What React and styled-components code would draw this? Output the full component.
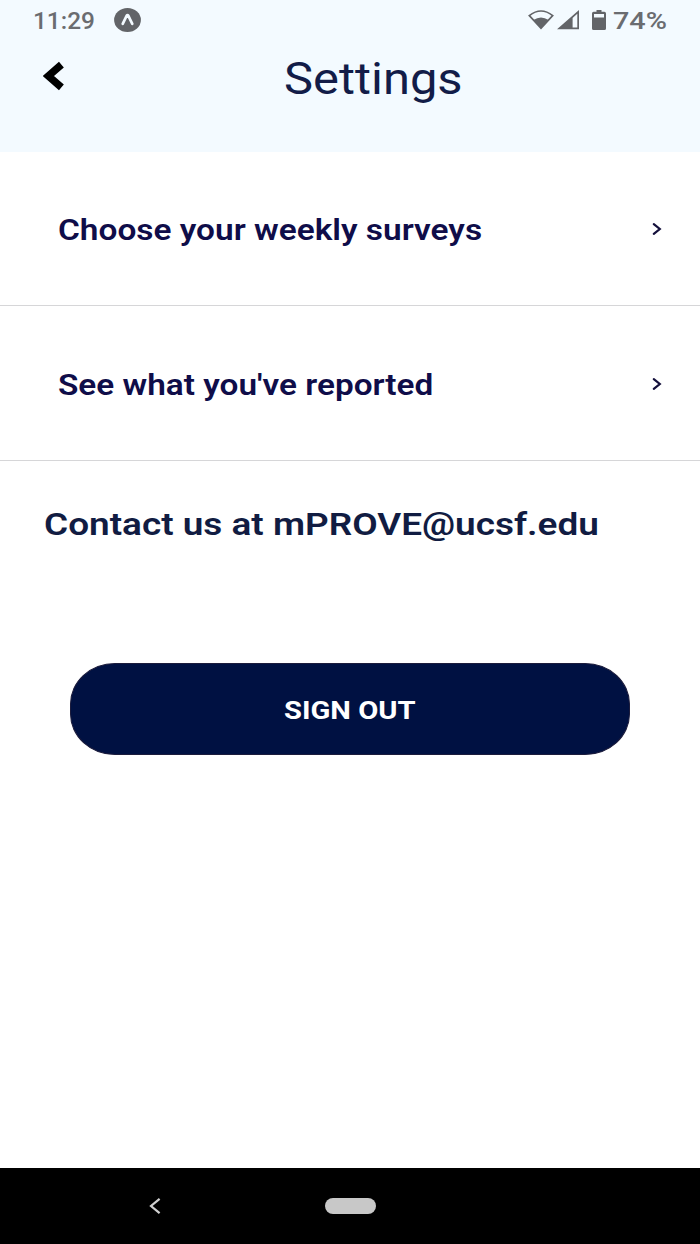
import React from "react";
import styled, { createGlobalStyle } from "styled-components";

const rows = [
  { text: "Choose your weekly surveys", width: 424, height: 154 },
  { text: "See what you've reported", width: 375, height: 155 },
];

const App = () => {
  return (
    <>
      <GlobalStyle />
      <Screen>
        <Header>
          <StatusBar>
            <Status>
              <Label $size={24} $width={62} $weight={500} $color="#6a6c70">
                11:29
              </Label>
              <ExpoIcon viewBox="0 0 27 24">
                <ellipse cx="13.5" cy="12" rx="13.4" ry="12" fill="#626468" />
                <path
                  d="M8.7 15.8 L12.6 7.8 Q13.5 6.4 14.4 7.8 L18.3 15.8"
                  fill="none"
                  stroke="#f3faff"
                  strokeWidth="2.7"
                  strokeLinecap="round"
                  strokeLinejoin="round"
                />
              </ExpoIcon>
            </Status>
            <Status>
              <WifiIcon viewBox="0 0 26 20">
                <path
                  d="M1.3 5.6 Q13 -3.6 24.7 5.6 L13 18.2 Z"
                  fill="none"
                  stroke="#626468"
                  strokeWidth="1.7"
                />
                <path d="M5.4 10 Q13 5 20.6 10 L13 18.6 Z" fill="#626468" />
              </WifiIcon>
              <SignalIcon viewBox="0 0 22 20">
                <path
                  d="M0 19.3 L22 0 V19.3 Z M15.6 8 V17.6 H20.3 V3.7 Z"
                  fill="#626468"
                  fillRule="evenodd"
                />
              </SignalIcon>
              <BatteryIcon viewBox="0 0 14 20">
                <path
                  d="M4.5 0 H9.5 V1.8 H12.4 Q14 1.8 14 3.4 V18.4 Q14 20 12.4 20 H1.6 Q0 20 0 18.4 V3.4 Q0 1.8 1.6 1.8 H4.5 Z M2 4 V7.4 H12 V4 Z"
                  fill="#626468"
                  fillRule="evenodd"
                />
              </BatteryIcon>
              <Label $size={24} $width={54} $weight={500} $color="#6a6c70">
                74%
              </Label>
            </Status>
          </StatusBar>
          <TitleBar>
            <BackIcon viewBox="0 0 22 30">
              <path d="M18.4 3.6 L5.4 15 L18.4 26.4" />
            </BackIcon>
            <Label as="h1" $size={44} $width={179} $weight={400} $color="#121c48">
              Settings
            </Label>
          </TitleBar>
        </Header>

        {rows.map((row) => (
          <Row key={row.text} $height={row.height}>
            <Label $size={29} $width={row.width} $weight={600} $color="#0f0d49">
              {row.text}
            </Label>
            <RowIcon viewBox="0 0 10 14">
              <path d="M1.8 2.2 L7.8 7 L1.8 11.8" />
            </RowIcon>
          </Row>
        ))}

        <Contact>
          <Label $size={32} $width={555} $weight={600} $color="#111c42">
            Contact us at mPROVE@ucsf.edu
          </Label>
        </Contact>

        <SignOut>
          <Label $size={26.5} $width={132} $weight={700} $color="#ffffff">
            SIGN OUT
          </Label>
        </SignOut>

        <NavBar>
          <NavBack viewBox="0 0 12 18">
            <path d="M10.6 1.8 L2 9 L10.6 16.2" />
          </NavBack>
          <HomePill />
        </NavBar>
      </Screen>
    </>
  );
};

const Label = ({ children, $width, ...props }) => {
  const ref = React.useRef(null);
  const [scale, setScale] = React.useState(1);

  React.useLayoutEffect(() => {
    setScale($width / ref.current.offsetWidth);
  }, [$width]);

  return (
    <LabelBox $width={$width}>
      <LabelText ref={ref} {...props} style={{ transform: `scaleX(${scale})` }}>
        {children}
      </LabelText>
    </LabelBox>
  );
};

export default App;

const GlobalStyle = createGlobalStyle`
  * {
    box-sizing: border-box;
  }

  body {
    margin: 0;
    background: #ffffff;
    font-family: Roboto, sans-serif;
  }
`;

const Screen = styled.div`
  width: 700px;
  height: 1244px;
  display: flex;
  flex-direction: column;
  overflow: hidden;
`;

const LabelBox = styled.div`
  width: ${(p) => p.$width}px;
  flex: none;
  padding-top: 2px;
`;

const LabelText = styled.span`
  display: block;
  width: max-content;
  margin: 0;
  font-size: ${(p) => p.$size}px;
  font-weight: ${(p) => p.$weight};
  line-height: 1.2;
  color: ${(p) => p.$color};
  white-space: nowrap;
  transform-origin: left center;
`;

const Header = styled.header`
  height: 152px;
  background: #f3faff;
`;

const StatusBar = styled.div`
  height: 40px;
  padding: 0 33px;
  display: flex;
  align-items: center;
  justify-content: space-between;
`;

const Status = styled.div`
  display: flex;
  align-items: center;
`;

const ExpoIcon = styled.svg`
  width: 27px;
  height: 24px;
  margin-left: 19px;
`;

const WifiIcon = styled.svg`
  width: 26px;
  height: 20px;
`;

const SignalIcon = styled.svg`
  width: 22px;
  height: 20px;
  margin-left: 3px;
`;

const BatteryIcon = styled.svg`
  width: 14px;
  height: 20px;
  margin: 0 7px 0 13px;
`;

const TitleBar = styled.div`
  height: 77px;
  display: flex;
  align-items: center;
  padding-left: 43px;
`;

const BackIcon = styled.svg`
  width: 22px;
  height: 30px;
  margin: 0 219px 6px 0;

  path {
    fill: none;
    stroke: #000000;
    stroke-width: 7.4;
  }
`;

const Row = styled.div`
  height: ${(p) => p.$height}px;
  padding: 2px 38px 0 58px;
  display: flex;
  align-items: center;
  justify-content: space-between;
  border-bottom: 1px solid #d6d6d8;
`;

const RowIcon = styled.svg`
  width: 10px;
  height: 14px;
  margin-bottom: 1px;

  path {
    fill: none;
    stroke: #14103c;
    stroke-width: 2.2;
    stroke-linecap: round;
  }
`;

const Contact = styled.div`
  height: 124px;
  padding-left: 44px;
  display: flex;
  align-items: center;
`;

const SignOut = styled.button`
  width: 560px;
  height: 92px;
  margin: 78px auto 0;
  padding: 0 1px 0 0;
  display: flex;
  align-items: center;
  justify-content: center;
  border: 1px solid #1c1c3c;
  border-radius: 45px / 41px;
  background: #001142;
  font-family: inherit;
`;

const NavBar = styled.div`
  height: 76px;
  margin-top: auto;
  padding-left: 149px;
  display: flex;
  align-items: center;
  background: #000000;
`;

const NavBack = styled.svg`
  width: 12px;
  height: 18px;

  path {
    fill: none;
    stroke: #d0d0d0;
    stroke-width: 2.2;
  }
`;

const HomePill = styled.div`
  width: 51px;
  height: 16px;
  margin-left: 164px;
  border-radius: 8px;
  background: #c8c8c8;
`;
